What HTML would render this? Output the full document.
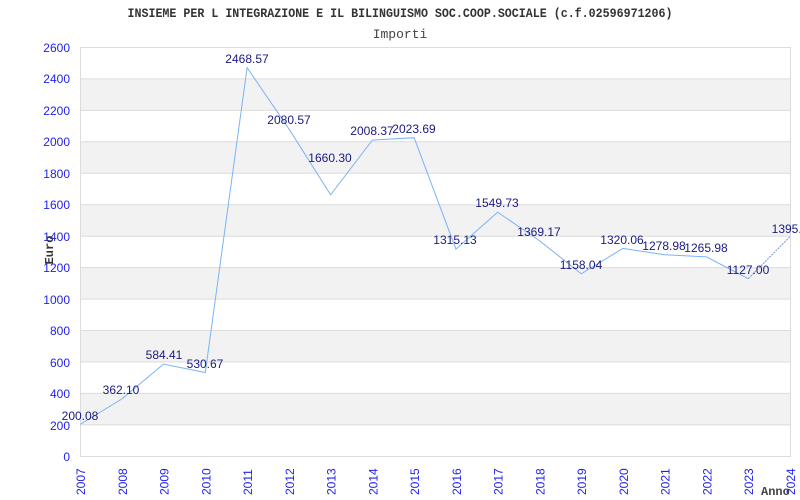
<!DOCTYPE html>
<html><head><meta charset="utf-8"><style>
html,body{margin:0;padding:0;background:#fff;}
svg{display:block;}
</style></head><body>
<svg width="800" height="500" xmlns="http://www.w3.org/2000/svg">
<rect width="800" height="500" fill="#fff"/>
<g fill="#f2f2f2">
<rect x="80" y="78.7" width="710" height="31.5"/>
<rect x="80" y="141.6" width="710" height="31.5"/>
<rect x="80" y="204.5" width="710" height="31.5"/>
<rect x="80" y="267.4" width="710" height="31.5"/>
<rect x="80" y="330.2" width="710" height="31.5"/>
<rect x="80" y="393.1" width="710" height="31.5"/>
</g>
<g stroke="#dcdcdc" stroke-width="1">
<line x1="80" y1="47.5" x2="790" y2="47.5"/>
<line x1="80" y1="78.9" x2="790" y2="78.9"/>
<line x1="80" y1="110.4" x2="790" y2="110.4"/>
<line x1="80" y1="141.8" x2="790" y2="141.8"/>
<line x1="80" y1="173.3" x2="790" y2="173.3"/>
<line x1="80" y1="204.7" x2="790" y2="204.7"/>
<line x1="80" y1="236.2" x2="790" y2="236.2"/>
<line x1="80" y1="267.6" x2="790" y2="267.6"/>
<line x1="80" y1="299.1" x2="790" y2="299.1"/>
<line x1="80" y1="330.5" x2="790" y2="330.5"/>
<line x1="80" y1="362" x2="790" y2="362"/>
<line x1="80" y1="393.4" x2="790" y2="393.4"/>
<line x1="80" y1="424.9" x2="790" y2="424.9"/>
<line x1="80" y1="456.5" x2="790" y2="456.5"/>
<line x1="80.5" y1="47" x2="80.5" y2="457"/>
<line x1="790.5" y1="47" x2="790.5" y2="457"/>
</g>
<polyline fill="none" stroke="#7ab4f5" stroke-width="1" points="80,424.5 121.8,399 163.5,364.1 205.3,372.5 247.1,67.7 288.8,128.7 330.6,194.8 372.4,140.1 414.1,137.7 455.9,249.1 497.6,212.2 539.4,240.6 581.2,273.8 622.9,248.4 664.7,254.8 706.5,256.9 748.2,278.7"/>
<line x1="748.2" y1="278.7" x2="790" y2="236.6" stroke="#7a9ac0" stroke-width="1" stroke-dasharray="2,1"/>
<text x="400" y="17" text-anchor="middle" font-family="Liberation Mono, monospace" font-weight="bold" font-size="12.6" fill="#333" textLength="545" lengthAdjust="spacingAndGlyphs">INSIEME PER L INTEGRAZIONE E IL BILINGUISMO SOC.COOP.SOCIALE (c.f.02596971206)</text>
<text x="400" y="38" text-anchor="middle" font-family="Liberation Mono, monospace" font-size="13" fill="#444">Importi</text>
<g font-family="Liberation Sans, sans-serif" font-size="12" fill="#2222ee" text-anchor="end">
<text x="70" y="52">2600</text><text x="70" y="83">2400</text><text x="70" y="115">2200</text>
<text x="70" y="146">2000</text><text x="70" y="178">1800</text><text x="70" y="209">1600</text>
<text x="70" y="241">1400</text><text x="70" y="272">1200</text><text x="70" y="304">1000</text>
<text x="70" y="335">800</text><text x="70" y="367">600</text><text x="70" y="398">400</text>
<text x="70" y="430">200</text><text x="70" y="461">0</text>
</g>
<g font-family="Liberation Sans, sans-serif" font-size="12" fill="#2222ee">
<text transform="translate(85,495) rotate(-90)">2007</text>
<text transform="translate(126.8,495) rotate(-90)">2008</text>
<text transform="translate(168.5,495) rotate(-90)">2009</text>
<text transform="translate(210.3,495) rotate(-90)">2010</text>
<text transform="translate(252.1,495) rotate(-90)">2011</text>
<text transform="translate(293.8,495) rotate(-90)">2012</text>
<text transform="translate(335.6,495) rotate(-90)">2013</text>
<text transform="translate(377.4,495) rotate(-90)">2014</text>
<text transform="translate(419.1,495) rotate(-90)">2015</text>
<text transform="translate(460.9,495) rotate(-90)">2016</text>
<text transform="translate(502.6,495) rotate(-90)">2017</text>
<text transform="translate(544.4,495) rotate(-90)">2018</text>
<text transform="translate(586.2,495) rotate(-90)">2019</text>
<text transform="translate(627.9,495) rotate(-90)">2020</text>
<text transform="translate(669.7,495) rotate(-90)">2021</text>
<text transform="translate(711.5,495) rotate(-90)">2022</text>
<text transform="translate(753.2,495) rotate(-90)">2023</text>
<text transform="translate(795,495) rotate(-90)">2024</text>
</g>
<text transform="translate(53,250) rotate(-90)" text-anchor="middle" font-family="Liberation Mono, monospace" font-weight="bold" font-size="12" fill="#333">Euro</text>
<text x="761" y="495" font-family="Liberation Mono, monospace" font-weight="bold" font-size="12" fill="#444">Anno</text>
<g font-family="Liberation Sans, sans-serif" font-size="12" fill="#1a1a80" text-anchor="middle">
<text x="80" y="420">200.08</text>
<text x="121" y="394">362.10</text>
<text x="164" y="359">584.41</text>
<text x="205" y="368">530.67</text>
<text x="247" y="63">2468.57</text>
<text x="289" y="124">2080.57</text>
<text x="330" y="162">1660.30</text>
<text x="372" y="135">2008.37</text>
<text x="414" y="133">2023.69</text>
<text x="455" y="244">1315.13</text>
<text x="497" y="207">1549.73</text>
<text x="539" y="236">1369.17</text>
<text x="581" y="269">1158.04</text>
<text x="622" y="244">1320.06</text>
<text x="664" y="250">1278.98</text>
<text x="706" y="252">1265.98</text>
<text x="748" y="274">1127.00</text>
<text x="790" y="233">1395.1</text>
</g>
</svg>
</body></html>
